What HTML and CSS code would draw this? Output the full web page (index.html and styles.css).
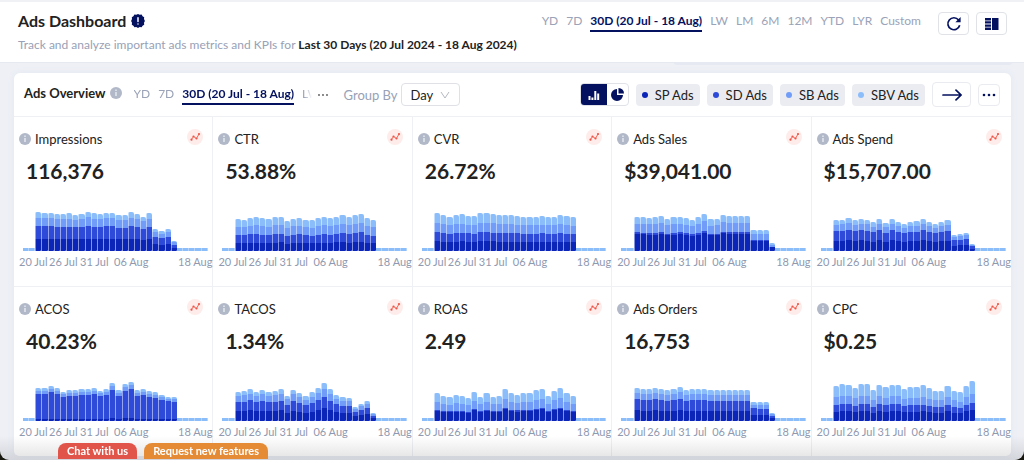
FILE: index.html
```html
<!DOCTYPE html>
<html lang="en">
<head>
<meta charset="utf-8">
<meta name="viewport" content="width=device-width, initial-scale=1">
<title>Ads Dashboard</title>
<link rel="stylesheet" href="styles.css">
</head>
<body>
<div class="app">
  <header class="topbar">
    <div class="heading">
      <h1 class="title">Ads Dashboard
        <svg class="alert-icon" viewBox="0 0 14 14" aria-hidden="true"><path fill="#04115f" d="M7 0l1.7.8 1.9-.2 1 1.600 1.600 1-.2 1.900L13.900 7l-.9 1.800.2 1.900-1.600 1-1 1.600-1.900-.2L7 14l-1.700-.9-1.900.2-1-1.600-1.600-1 .2-1.900L.1 7l.9-1.900-.2-1.900 1.600-1 1-1.600 1.900.2z"/><path stroke="#fff" stroke-width="1.500" stroke-linecap="round" d="M7 3.800v3.600M7 10v.1"/></svg>
      </h1>
      <p class="subtitle">Track and analyze important ads metrics and KPIs for <strong>Last 30 Days (20 Jul 2024 - 18 Aug 2024)</strong></p>
    </div>
    <div class="topbar-tools">
      <nav class="ranges" aria-label="Date range">
        <a href="#">YD</a><a href="#">7D</a><a href="#" class="active">30D (20 Jul - 18 Aug)</a><a href="#">LW</a><a href="#">LM</a><a href="#">6M</a><a href="#">12M</a><a href="#">YTD</a><a href="#">LYR</a><a href="#">Custom</a>
      </nav>
      <div class="actions">
        <button class="square-btn" aria-label="Refresh"><svg width="16" height="16" viewBox="0 0 16 16" fill="none" stroke="#04115f" stroke-width="1.700"><path d="M13.700 9.300A6 6 0 1 1 12.600 4"/><path fill="#04115f" stroke="none" d="M14.600 1v5.200H9.400z"/></svg></button>
        <button class="square-btn" aria-label="Layout"><svg width="14" height="14" viewBox="0 0 14 14" fill="#04115f"><path d="M0 1h6v2.400H0zM0 4.200h6v2.400H0zM0 7.400h6v2.400H0zM0 10.600h6V13H0zM7 1h6.500v12H7z"/></svg></button>
      </div>
    </div>
  </header>

  <main class="content">
    <section class="card">
      <div class="toolbar">
        <h2 class="card-title">Ads Overview</h2>
        <svg class="info-icon" viewBox="0 0 12 12" aria-hidden="true"><circle cx="6" cy="6" r="6" fill="#b1b8c8"/><path stroke="#e9ecf2" stroke-width="1.400" d="M6 5v4M6 2.600V4"/></svg>
        <nav class="ranges ranges-clipped" aria-label="Overview range">
          <a href="#">YD</a><a href="#">7D</a><a href="#" class="active">30D (20 Jul - 18 Aug)</a><a href="#">LW</a>
        </nav>
        <button class="more-ranges" aria-label="More ranges"><svg width="12" height="4" viewBox="0 0 12 4" fill="#555"><circle cx="2" cy="2" r=".9"/><circle cx="6" cy="2" r=".9"/><circle cx="10" cy="2" r=".9"/></svg></button>
        <label class="group-label" for="group">Group By</label>
        <div class="select-wrap">
          <select id="group" class="select"><option>Day</option></select>
          <svg class="chevron" viewBox="0 0 10 8" fill="none" stroke="#b4b8c0"><path d="M1 1l4 6 4-6"/></svg>
        </div>
        <div class="toolbar-right">
          <div class="toggle">
            <button class="toggle-btn on" aria-label="Bar chart"><svg width="12" height="10" viewBox="0 0 12 10" fill="#fff"><path d="M.5 6h2v4h-2zM3.400 7.500h2V10h-2zM6.300 1h2v9h-2zM9.200 3.500h2V10h-2z"/></svg></button>
            <button class="toggle-btn" aria-label="Pie chart"><svg width="13" height="13" viewBox="0 0 13 13" fill="#04115f"><path d="M6 1v6h6A6 6 0 1 1 6 1z"/><path d="M7.500 0A5.500 5.500 0 0 1 13 5.500H7.500z"/></svg></button>
          </div>
          <button class="chip"><i class="dot sp"></i>SP Ads</button>
          <button class="chip"><i class="dot sd"></i>SD Ads</button>
          <button class="chip"><i class="dot sb"></i>SB Ads</button>
          <button class="chip"><i class="dot sbv"></i>SBV Ads</button>
          <button class="arrow-btn" aria-label="Open"><svg width="20" height="12" viewBox="0 0 20 12" fill="none" stroke="#04115f" stroke-width="1.700" stroke-linecap="round"><path d="M1 6h18M14 1.200L19 6l-5 4.800"/></svg></button>
          <button class="dots-btn" aria-label="More"><svg width="14" height="4" viewBox="0 0 14 4" fill="#04115f"><circle cx="2" cy="2" r="1.300"/><circle cx="7" cy="2" r="1.300"/><circle cx="12" cy="2" r="1.300"/></svg></button>
        </div>
      </div>
      <div class="metrics" id="metrics"></div>
    </section>
  </main>
  <div class="floaters">
    <button class="floater chat">Chat with us</button>
    <button class="floater request">Request new features</button>
  </div>
</div>
<script src="charts.js"></script>
</body>
</html>
```
FILE: styles.css
```css
* { box-sizing: border-box; }
body {
  margin: 0;
  background: #17170f;
  font-family: Lato, "Liberation Sans", sans-serif;
  font-size: 13px;
  color: #222;
}
h1, h2, h3, p { margin: 0; }
button, select { font: inherit; color: inherit; padding: 0; border: 0; background: none; }
svg { display: block; flex: none; }

.app {
  position: relative;
  display: flex;
  flex-direction: column;
  min-height: calc(100vh - 1px);
  background: #eef0f6;
  border-top: 2px solid #eff1f5;
  border-radius: 0 0 9px 9px;
  overflow: hidden;
}
.topbar {
  position: relative;
  display: flex;
  justify-content: space-between;
  align-items: flex-start;
  padding: 9px 17px 8px 18px;
  background: #fff;
  border-bottom: 1px solid #e6e9ef;
}
.topbar::after {
  content: "";
  position: absolute;
  top: 100%;
  right: 12px;
  width: 33%;
  height: 3px;
  background: #e7e9f2;
  border-radius: 0 0 6px 6px;
}
.title {
  display: flex;
  align-items: center;
  gap: 5px;
  font-size: 16px;
  line-height: 20px;
  font-weight: 700;
}
.alert-icon { width: 14px; height: 14px; }
.subtitle {
  margin-top: 5px;
  font-size: 12px;
  line-height: 18px;
  color: #98a1b6;
  white-space: nowrap;
}
.subtitle strong { color: #222; }
.topbar-tools { display: flex; align-items: flex-start; gap: 17px; }
.ranges { display: flex; gap: 8px; font-size: 12px; line-height: 18px; white-space: nowrap; }
.topbar .ranges { padding-top: 1px; }
.ranges a { color: #9aa3b7; text-decoration: none; }
.ranges .active { color: #04115f; font-weight: 700; border-bottom: 2px solid #04115f; }
.actions { display: flex; gap: 7px; padding-top: 1px; }
.square-btn {
  display: flex;
  align-items: center;
  justify-content: center;
  width: 31px;
  height: 23px;
  border: 1px solid #e0e2e8;
  border-radius: 4px;
}

.content { flex: 1; padding: 10px 13px 4px 14px; }
.card { background: #fff; border-radius: 6px 6px 5px 5px; box-shadow: 0 0 6px #e4e7ef; }
.toolbar { display: flex; align-items: center; height: 43px; padding: 0 11px 0 10px; }
.card-title { font-size: 13px; line-height: 18px; font-weight: 700; }
.info-icon { width: 12px; height: 12px; }
.toolbar .card-title, .toolbar .info-icon { margin-bottom: 3px; }
.toolbar .info-icon { margin-left: 4px; }
.ranges-clipped {
  width: 178px;
  margin-left: 12px;
  overflow: hidden;
  -webkit-mask-image: linear-gradient(90deg, #000 170px, transparent);
  mask-image: linear-gradient(90deg, #000 170px, transparent);
}
.more-ranges { margin: 0 15px 0 5px; }
.group-label { color: #98a1b6; }
.select-wrap { position: relative; margin-left: 3px; }
.select {
  display: block;
  appearance: none;
  width: 59px;
  height: 23px;
  padding-left: 9px;
  border: 1px solid #dfe1e6;
  border-radius: 4px;
  background: #fff;
}
.chevron { position: absolute; right: 10px; top: 8px; width: 10px; height: 8px; pointer-events: none; }
.toolbar-right { display: flex; align-items: center; gap: 7px; margin-left: auto; }
.toggle { display: flex; border: 1px solid #e0e2e8; border-radius: 4px; overflow: hidden; }
.toggle-btn { display: flex; align-items: center; justify-content: center; width: 21px; height: 21px; }
.toggle-btn.on { width: 26px; background: #04115f; }
.chip {
  display: flex;
  align-items: center;
  gap: 7px;
  height: 22px;
  padding: 0 6px;
  border-radius: 4px;
  background: #ebecf2;
}
.dot { width: 6px; height: 6px; border-radius: 50%; }
.sp { background: #0a25b8; }
.sd { background: #2d4bd8; }
.sb { background: #719df8; }
.sbv { background: #8bbdfb; }
.arrow-btn, .dots-btn {
  display: flex;
  align-items: center;
  justify-content: center;
  width: 39px;
  height: 25px;
  border: 1px solid #e9ebf0;
  border-radius: 4px;
}
.dots-btn { width: 22px; height: 22px; }

.metrics { display: grid; grid-template-columns: repeat(5, minmax(0, 1fr)); }
.metric {
  height: 170px;
  padding: 13px 5px 0;
  border-top: 1px solid #eff0f3;
  border-right: 1px solid #eff0f3;
}
.metric:nth-child(5n) { border-right: 0; }
.metric-head { display: flex; align-items: center; gap: 4px; height: 18px; }
.metric-name { flex: 1; font-size: 13px; line-height: 18px; font-weight: 400; }
.trend { width: 16px; height: 16px; margin: 0 4px 4px 0; }
.value { margin: 9px 0 0 7px; font-size: 21px; line-height: 28px; font-weight: 700; }
.bars { display: flex; align-items: flex-end; height: 40px; margin: 26px 0 0 4px; width: 98%; }
.bar { flex: 1 1 5px; display: flex; flex-direction: column; border-radius: 2px 2px 1px 1px; overflow: hidden; }
.segment { border-left: 1px solid rgba(255, 255, 255, .5); }
.bar.empty { height: 3px; border-right: 1px solid #b5d4fd; border-radius: 0; }
.axis {
  display: grid;
  grid-template-columns: 30px 31px 34px 1fr auto;
  margin: 4px -5px 0 0;
  font-size: 11px;
  line-height: 14px;
  color: #8f99b0;
  white-space: nowrap;
}

.floaters { position: fixed; z-index: 1; bottom: 1px; left: 58px; display: flex; gap: 7px; }
.floater {
  height: 16px;
  padding: 0 9px;
  border-radius: 8px 8px 0 0;
  font-size: 11px;
  line-height: 16px;
  font-weight: 700;
  color: #fff;
}
.chat { background: #e1544a; }
.request { background: #e58a35; }
.app::after {
  content: "";
  position: absolute;
  left: 0;
  right: 0;
  bottom: 0;
  height: 24px;
  background: linear-gradient(transparent, rgba(20, 20, 30, .12));
  pointer-events: none;
}
```
FILE: charts.js
```js
// Each metric: name, value, share of SP/SD/SB/SBV, daily totals (out of 120).
const metrics = [
  ["Impressions", "116,376", [32, 33, 21, 14], [116,115,114,111,112,113,109,111,117,113,110,115,115,108,108,116,110,103,113,65,61,67,30]],
  ["CTR", "53.88%", [25, 25, 26, 24], [95,94,100,102,99,96,102,103,90,97,100,94,92,99,101,98,103,108,102,108,112,99,93]],
  ["CVR", "26.72%", [26, 24, 25, 25], [114,109,103,109,110,106,105,114,114,111,109,107,109,106,103,103,103,106,103,103,108,105,102]],
  ["Ads Sales", "$39,041.00", [49, 5, 26, 20], [103,102,100,101,105,97,101,103,98,93,101,111,95,97,108,105,104,104,106,64,62,62,24]],
  ["Ads Spend", "$15,707.00", [33, 32, 20, 15], [92,94,99,92,96,94,86,97,84,97,88,82,88,89,97,88,82,88,93,49,52,55,22]],
  ["ACOS", "40.23%", [7, 74, 10, 9], [100,100,106,100,88,94,94,97,96,100,91,97,115,92,112,118,94,96,90,87,79,73,72]],
  ["TACOS", "1.34%", [33, 31, 21, 15], [88,91,97,88,94,88,91,96,76,94,85,74,86,100,114,96,79,71,70,43,52,60,25]],
  ["ROAS", "2.49", [36, 4, 28, 32], [83,74,72,78,75,70,88,73,83,73,76,97,85,79,85,85,92,97,76,91,100,83,76]],
  ["Ads Orders", "16,753", [32, 33, 19, 16], [100,96,96,100,97,93,97,103,94,95,97,95,93,94,92,94,93,94,94,58,57,57,25]],
  ["CPC", "$0.25", [27, 19, 22, 32], [105,112,109,100,110,110,92,109,102,109,109,96,102,103,107,99,91,91,106,91,86,106,119]]
];
const keys = ["sp", "sd", "sb", "sbv"];
const empty = '<div class="bar empty sbv"></div>';

function barMarkup(total, share) {
  const parts = keys.map((k, i) => `<div class="segment ${k}" style="flex:${share[i]}"></div>`).reverse().join("");
  return `<div class="bar" style="height:${(total / 1.2).toFixed(1)}%">${parts}</div>`;
}

document.getElementById("metrics").innerHTML = metrics.map(([name, value, share, totals]) => `
  <article class="metric">
    <div class="metric-head">
      <svg class="info-icon" viewBox="0 0 12 12"><circle cx="6" cy="6" r="6" fill="#b1b8c8"/><path stroke="#e9ecf2" stroke-width="1.4" d="M6 5v4M6 2.600V4"/></svg>
      <h3 class="metric-name">${name}</h3>
      <svg class="trend" viewBox="0 0 16 16"><circle cx="8" cy="8" r="8" fill="#fdecea"/><path fill="none" stroke="#f2695c" d="M4.500 10.500l2-3 3 2 2.500-4.500"/><g fill="#ee5548"><circle cx="4.500" cy="10.700" r="1.100"/><circle cx="6.500" cy="7.500" r="1.100"/><circle cx="9.500" cy="9.500" r="1.100"/><circle cx="12" cy="5" r="1.100"/></g></svg>
    </div>
    <p class="value">${value}</p>
    <div class="bars">${empty.repeat(2)}${totals.map(t => barMarkup(t, share)).join("")}${empty.repeat(5)}</div>
    <div class="axis"><span>20 Jul</span><span>26 Jul</span><span>31 Jul</span><span>06 Aug</span><span>18 Aug</span></div>
  </article>`).join("");
```
